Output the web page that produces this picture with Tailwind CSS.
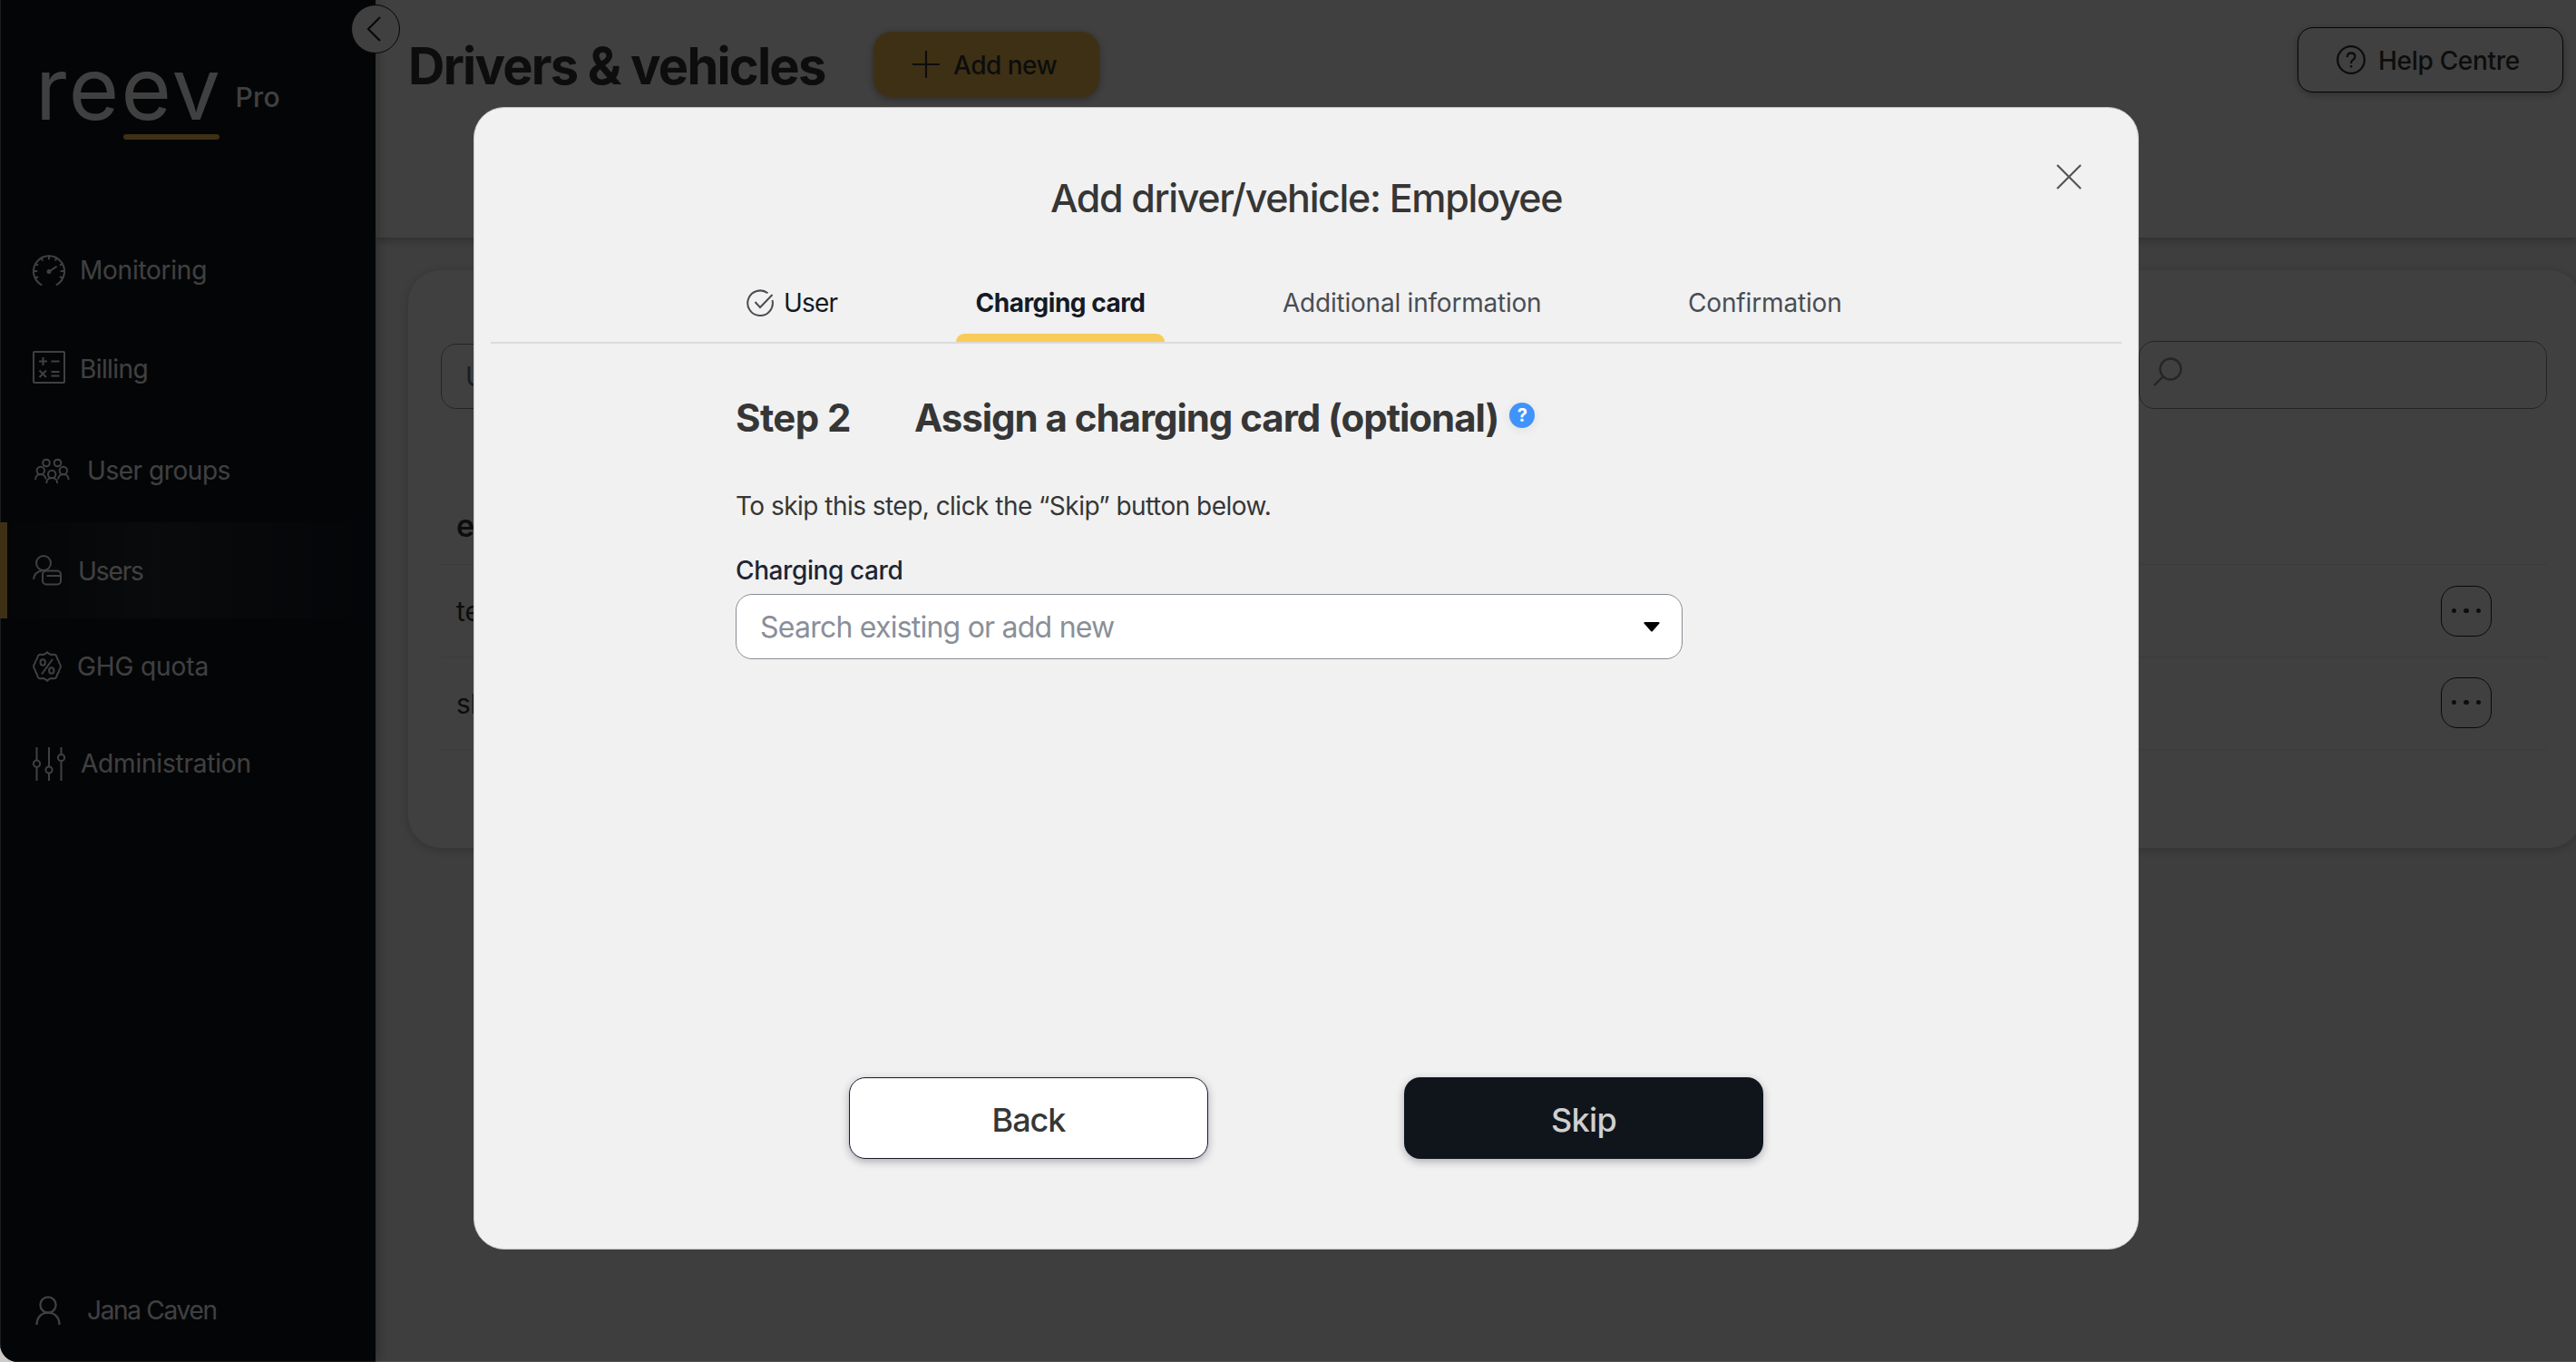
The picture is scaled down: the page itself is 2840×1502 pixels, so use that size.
<!DOCTYPE html>
<html lang="en">
<head>
  <meta charset="UTF-8" />
  <meta name="viewport" content="width=device-width, initial-scale=1.0"/>
  <title>reev - Drivers &amp; vehicles</title>
  <script src="https://cdn.jsdelivr.net/npm/@tailwindcss/browser@4"></script>
</head>
<body class="bg-[#cdc9c7] font-['Inter','Liberation_Sans',sans-serif] text-[28px] leading-9 text-[#363636] overflow-hidden">

  <div class="relative flex w-[2840px] h-[1502px] rounded-bl-[20px] overflow-hidden bg-[#f7f7f7]">

    <!-- Sidebar -->
    <aside class="relative z-10 w-[414px] shrink-0 flex flex-col bg-[#10151f] border-l border-[#70767c] text-white shadow-[2px_0_12px_rgba(0,0,0,0.3)]">
      <div class="h-[244px] pl-[38px] pt-[50px] flex items-start">
        <div>
          <div class="text-[95px] leading-[96px] tracking-[2.5px]">reev</div>
          <div class="mt-0.5 ml-[97px] w-[106px] h-1.5 rounded-full bg-[#f8c052]"></div>
        </div>
        <div class="mt-[42px] ml-[14px] text-[30px] leading-[30px] font-medium tracking-[0.3px]">Pro</div>
      </div>

      <nav class="flex flex-col whitespace-nowrap">
        <a class="h-[108px] pl-[35px] flex items-center gap-4">
          <svg class="size-9 mb-px" viewBox="0 0 36 36" fill="none" stroke="currentColor" stroke-width="2" stroke-linecap="round">
            <path d="M9.500 34A17 17 0 1 1 26.500 34"/>
            <path d="M18 2.500v3M9.500 4.800l1.200 2M26.500 4.800l-1.200 2M3.300 11l2 1.200M32.700 11l-2 1.200M1.500 19h3M34.500 19h-3M3.300 26.500l2-1M32.700 26.500l-2-1"/>
            <path d="M18 19.500l8-5.300"/>
            <circle cx="18" cy="19.500" r="1.500" fill="currentColor"/>
          </svg>
          <span class="tracking-[-0.25px]">Monitoring</span>
        </a>
        <a class="h-[110px] pl-[35px] flex items-center gap-4">
          <svg class="size-9 mb-1" viewBox="0 0 36 36" fill="none" stroke="currentColor" stroke-width="2">
            <rect x="1" y="1" width="34" height="34" rx="1"/>
            <path d="M7 11.500h9M11.500 7v9M20.500 11.500h9M7.500 21.500l7.500 7.500M15 21.500l-7.500 7.500M20.500 23h9M20.500 27.500h9"/>
          </svg>
          <span class="tracking-[-0.6px]">Billing</span>
        </a>
        <a class="h-[114px] pl-[37px] flex items-center gap-[19px]">
          <svg class="w-[39px] h-[29px]" viewBox="0 0 39 29" fill="none" stroke="currentColor" stroke-width="2">
            <circle cx="13" cy="5.500" r="3.800"/><circle cx="25.500" cy="5.500" r="3.800"/>
            <circle cx="6.800" cy="14" r="4.200"/><circle cx="31.800" cy="14" r="4.200"/>
            <circle cx="19.200" cy="18" r="4.200"/>
            <path d="M1 24c0-3.500 2.500-6 5.800-6s5.500 2.500 5.700 5.500M26 23.500c.3-3 2.500-5.500 5.800-5.500s5.800 2.500 5.800 6M13.200 28c0-3.500 2.500-6 6-6s6 2.500 6 6"/>
          </svg>
          <span class="tracking-[-0.45px]">User groups</span>
        </a>
        <a class="-ml-px h-[106px] pl-7 flex items-center gap-[18px] border-l-8 border-[#f8c052] bg-linear-to-r from-[#14171c] via-[#282c33] via-40% to-[#10151f]">
          <svg class="w-8 h-[34px]" viewBox="0 0 32 34" fill="none" stroke="currentColor" stroke-width="2">
            <circle cx="12" cy="9" r="8"/>
            <path d="M1 27C1.500 21.500 5 18 10.500 17.200"/>
            <rect x="11" y="17.500" width="20" height="15" rx="4"/>
            <path d="M15.500 23H31"/>
          </svg>
          <span class="tracking-[-1.1px] mt-0.5">Users</span>
        </a>
        <a class="h-[106px] pl-[35px] flex items-center gap-[17px]">
          <svg class="w-8 h-[34px]" viewBox="0 0 32 34" fill="none" stroke="currentColor" stroke-width="2" stroke-linejoin="round">
            <path d="M16 1.200Q18.200 3.600 20.500 4Q23.500 3.300 25 4.200Q26.900 5.400 27.200 8.600Q29 10.500 29 12.500Q30.900 15 30.900 17Q30.900 19 29 21.500Q29 23.500 27.200 25.400Q26.900 28.600 25 29.800Q23.500 30.700 20.500 30Q18.200 30.400 16 32.800Q13.800 30.400 11.500 30Q8.500 30.700 7 29.800Q5.100 28.600 4.800 25.400Q3 23.500 3 21.500Q1.100 19 1.100 17Q1.100 15 3 12.500Q3 10.500 4.800 8.600Q5.100 5.400 7 4.200Q8.500 3.300 11.500 4Q13.800 3.600 16 1.200Z"/>
            <ellipse cx="11.200" cy="12.500" rx="2.700" ry="3.200"/>
            <ellipse cx="20.800" cy="21.500" rx="2.700" ry="3.200"/>
            <path d="M22 9L10 25.500"/>
          </svg>
          <span class="tracking-[-0.1px]">GHG quota</span>
        </a>
        <a class="h-[108px] pl-[35px] flex items-center gap-[17px]">
          <svg class="w-9 h-[37px]" viewBox="0 0 36 37" fill="none" stroke="currentColor" stroke-width="2">
            <path d="M4.500 0v14.500M4.500 22v15M18 0v21M18 29v8M31.500 0v7.500M31.500 15v22"/>
            <circle cx="4.500" cy="18.200" r="3.600"/>
            <circle cx="18" cy="25" r="3.600"/>
            <circle cx="31.500" cy="11.500" r="3.600"/>
          </svg>
          <span class="tracking-[-0.2px]">Administration</span>
        </a>
      </nav>

      <div class="mt-auto mb-[39px] pl-[38px] flex items-center gap-[29px]">
        <svg class="w-7 h-8" viewBox="0 0 28 32" fill="none" stroke="currentColor" stroke-width="2.300">
          <circle cx="14" cy="10" r="8.600"/>
          <path d="M1.500 32C1.500 24 6.500 18.700 14 18.700S26.500 24 26.500 32"/>
        </svg>
        <span class="tracking-[-1.3px]">Jana Caven</span>
      </div>

      <button class="absolute top-[5px] -right-[27px] size-[54px] rounded-full bg-white border border-[#10151f] flex items-center justify-center">
        <svg class="w-4 h-7 mr-1 text-[#222]" viewBox="0 0 16 28" fill="none" stroke="currentColor" stroke-width="2.200">
          <path d="M15 1L2 14L15 27"/>
        </svg>
      </button>
    </aside>

    <!-- Page behind the dialog -->
    <main class="flex-1 min-w-0 flex flex-col">
      <header class="h-[262px] shrink-0 bg-white shadow-[0_2px_10px_rgba(0,0,0,0.3)] pl-9 pr-3.5 flex items-start">
        <h1 class="mt-[45px] text-[56px] leading-[57px] font-bold tracking-[-1.8px] whitespace-nowrap w-[513px]">Drivers &amp; vehicles</h1>
        <button class="mt-[35px] w-[249px] h-[72px] rounded-[20px] bg-[#f8c052] shadow-[0_2px_10px_rgba(0,0,0,0.35)] flex items-center pl-[43px] gap-[15px] font-medium">
          <svg class="size-[30px]" viewBox="0 0 30 30" stroke="currentColor" stroke-width="2.200"><path d="M15 0v30M0 15h30"/></svg>
          <span class="tracking-[-0.5px] whitespace-nowrap mt-0.5">Add new</span>
        </button>
        <button class="ml-auto mt-[30px] w-[293px] h-[72px] rounded-[17px] bg-white border border-[#111] shadow-[0_2px_8px_rgba(0,0,0,0.3)] flex items-center pl-[42px] gap-3.5 font-medium">
          <svg class="size-8" viewBox="0 0 32 32" fill="none" stroke="currentColor" stroke-width="2.300">
            <circle cx="16" cy="16" r="14.800"/>
            <path d="M11.800 13c0-2.800 1.800-4.500 4.300-4.500s4.300 1.600 4.300 4c0 3.300-4.300 3.300-4.300 6.500v1"/>
            <path d="M16.100 22v2.500"/>
          </svg>
          <span class="tracking-[-0.3px] whitespace-nowrap mt-0.5">Help Centre</span>
        </button>
      </header>

      <section class="mt-9 ml-9 -mr-1.5 h-[637px] rounded-[36px] bg-white shadow-[0_2px_12px_rgba(0,0,0,0.22)] pl-9 pr-[38px]">
        <div class="flex justify-between pt-[78px]">
          <div class="mt-[3px] w-[420px] h-[72px] rounded-[17px] border border-[#8f9599] pl-[26px] flex items-center text-[30px] text-[#70757d]">User type</div>
          <div class="w-[450px] h-[75px] rounded-[17px] border border-[#8f9599] pl-[15px] pt-[17px]">
            <svg class="size-8 text-[#8f9599]" viewBox="0 0 32 32" fill="none" stroke="currentColor" stroke-width="2.400">
              <circle cx="19" cy="13" r="11.500"/>
              <path d="M10.800 21.200L1 31"/>
            </svg>
          </div>
        </div>
        <div class="mt-[69px] h-[103px] pt-[42px] pl-[17px] border-b border-[#e8e8e8] text-[34px] font-semibold">email</div>
        <div class="h-[102px] pl-[17px] pr-[61px] flex items-center justify-between border-b border-[#e8e8e8] text-[30px]">
          <span>test@reev.com</span>
          <span class="size-14 rounded-[18px] border border-[#222] flex items-center justify-center gap-2">
            <i class="size-[5.5px] rounded-full bg-[#363636]"></i><i class="size-[5.5px] rounded-full bg-[#363636]"></i><i class="size-[5.5px] rounded-full bg-[#363636]"></i>
          </span>
        </div>
        <div class="h-[102px] pl-[17px] pr-[61px] flex items-center justify-between border-b border-[#e8e8e8] text-[30px]">
          <span>sl@reev.com</span>
          <span class="size-14 mb-0.5 rounded-[18px] border border-[#222] flex items-center justify-center gap-2">
            <i class="size-[5.5px] rounded-full bg-[#363636]"></i><i class="size-[5.5px] rounded-full bg-[#363636]"></i><i class="size-[5.5px] rounded-full bg-[#363636]"></i>
          </span>
        </div>
      </section>
    </main>

    <!-- Backdrop -->
    <div class="absolute inset-0 z-20 bg-black/75 border-b border-white/10"></div>

    <!-- Dialog -->
    <div class="absolute z-30 left-[522px] top-[118px] w-[1836px] h-[1260px] rounded-[34px] bg-[#f1f1f1] border border-[#c4c4c4] flex flex-col whitespace-nowrap">
      <button class="absolute right-[62px] top-[62px] text-[#555]">
        <svg class="size-7" viewBox="0 0 28 28" stroke="currentColor" stroke-width="2.200"><path d="M1 1l26 26M27 1L1 27"/></svg>
      </button>

      <h2 class="mt-[72px] text-center text-[43px] leading-[54px] font-medium tracking-[-1.35px]">Add driver/vehicle: Employee</h2>

      <div class="mt-[61px] mx-[18px] h-[73px] border-b-2 border-[#dbdbdb] flex items-start">
        <div class="ml-[282px] mt-2.5 w-[231px] flex items-center gap-[11px] text-[#151a24]">
          <svg class="size-[30px] text-[#4a4d54]" viewBox="0 0 30 30" fill="none" stroke="currentColor" stroke-width="2">
            <path d="M23.500 4.300A13.800 13.800 0 1 0 28.500 12"/>
            <path d="M9.500 14l5.500 6L28.500 6"/>
          </svg>
          <span class="tracking-[-0.8px]">User</span>
        </div>
        <div class="w-[230px] h-[71px] pt-2.5 flex flex-col items-center justify-between text-[#151a24] font-bold">
          <span class="tracking-[-0.5px]">Charging card</span>
          <span class="w-full h-[9px] rounded-t-[9px] bg-[#f8cb5a]"></span>
        </div>
        <span class="ml-[130px] mt-2.5 w-[447px] tracking-[-0.22px] text-[#4a4d54]">Additional information</span>
        <span class="mt-2.5 tracking-[-0.15px] text-[#4a4d54]">Confirmation</span>
      </div>

      <div class="pl-[288px]">
        <div class="mt-[55px] flex text-[42px] leading-[54px] font-bold">
          <span class="w-[197px] tracking-[-0.6px]">Step 2</span>
          <span class="tracking-[-1.05px]">Assign a charging card (optional)</span>
          <span class="mt-2.5 ml-3 size-7 rounded-full bg-[#4093fb] shadow-[0_2px_12px_rgba(0,0,0,0.08)] text-white text-[20px] leading-7 text-center tracking-normal">?</span>
        </div>
        <p class="mt-[52px] tracking-[-0.53px]">To skip this step, click the “Skip” button below.</p>
        <label class="mt-[35px] block font-medium text-[#1f2533] tracking-[-0.4px]">Charging card</label>
        <div class="mt-2 w-[1044px] h-[72px] rounded-[18px] bg-white border border-[#888c94] flex items-center justify-between pl-[26px] pr-6 text-[32px] text-[#8a8f98]">
          <span class="tracking-[-0.77px] mt-px">Search existing or add new</span>
          <svg class="w-[18px] h-[11px]" viewBox="0 0 18 11"><path d="M1.500 0H16.500Q18.500 0.500 17 2L10 10Q9 11 8 10L1 2Q-0.500 0.500 1.500 0Z" fill="#000"/></svg>
        </div>
      </div>

      <div class="mt-auto mb-[99px] pl-[413px] flex gap-[216px] text-[36px] font-medium">
        <button class="w-[396px] h-[90px] pt-[3px] rounded-[18px] bg-white border border-[#1a1a2a] shadow-[0_3px_10px_rgba(20,10,40,0.3)] tracking-[-1px]">Back</button>
        <button class="w-[396px] h-[90px] pt-[3px] rounded-[18px] bg-[#10151c] text-[#cfcfcf] shadow-[0_3px_10px_rgba(20,10,40,0.3)] tracking-[-0.7px]">Skip</button>
      </div>
    </div>
  </div>
</body>
</html>
